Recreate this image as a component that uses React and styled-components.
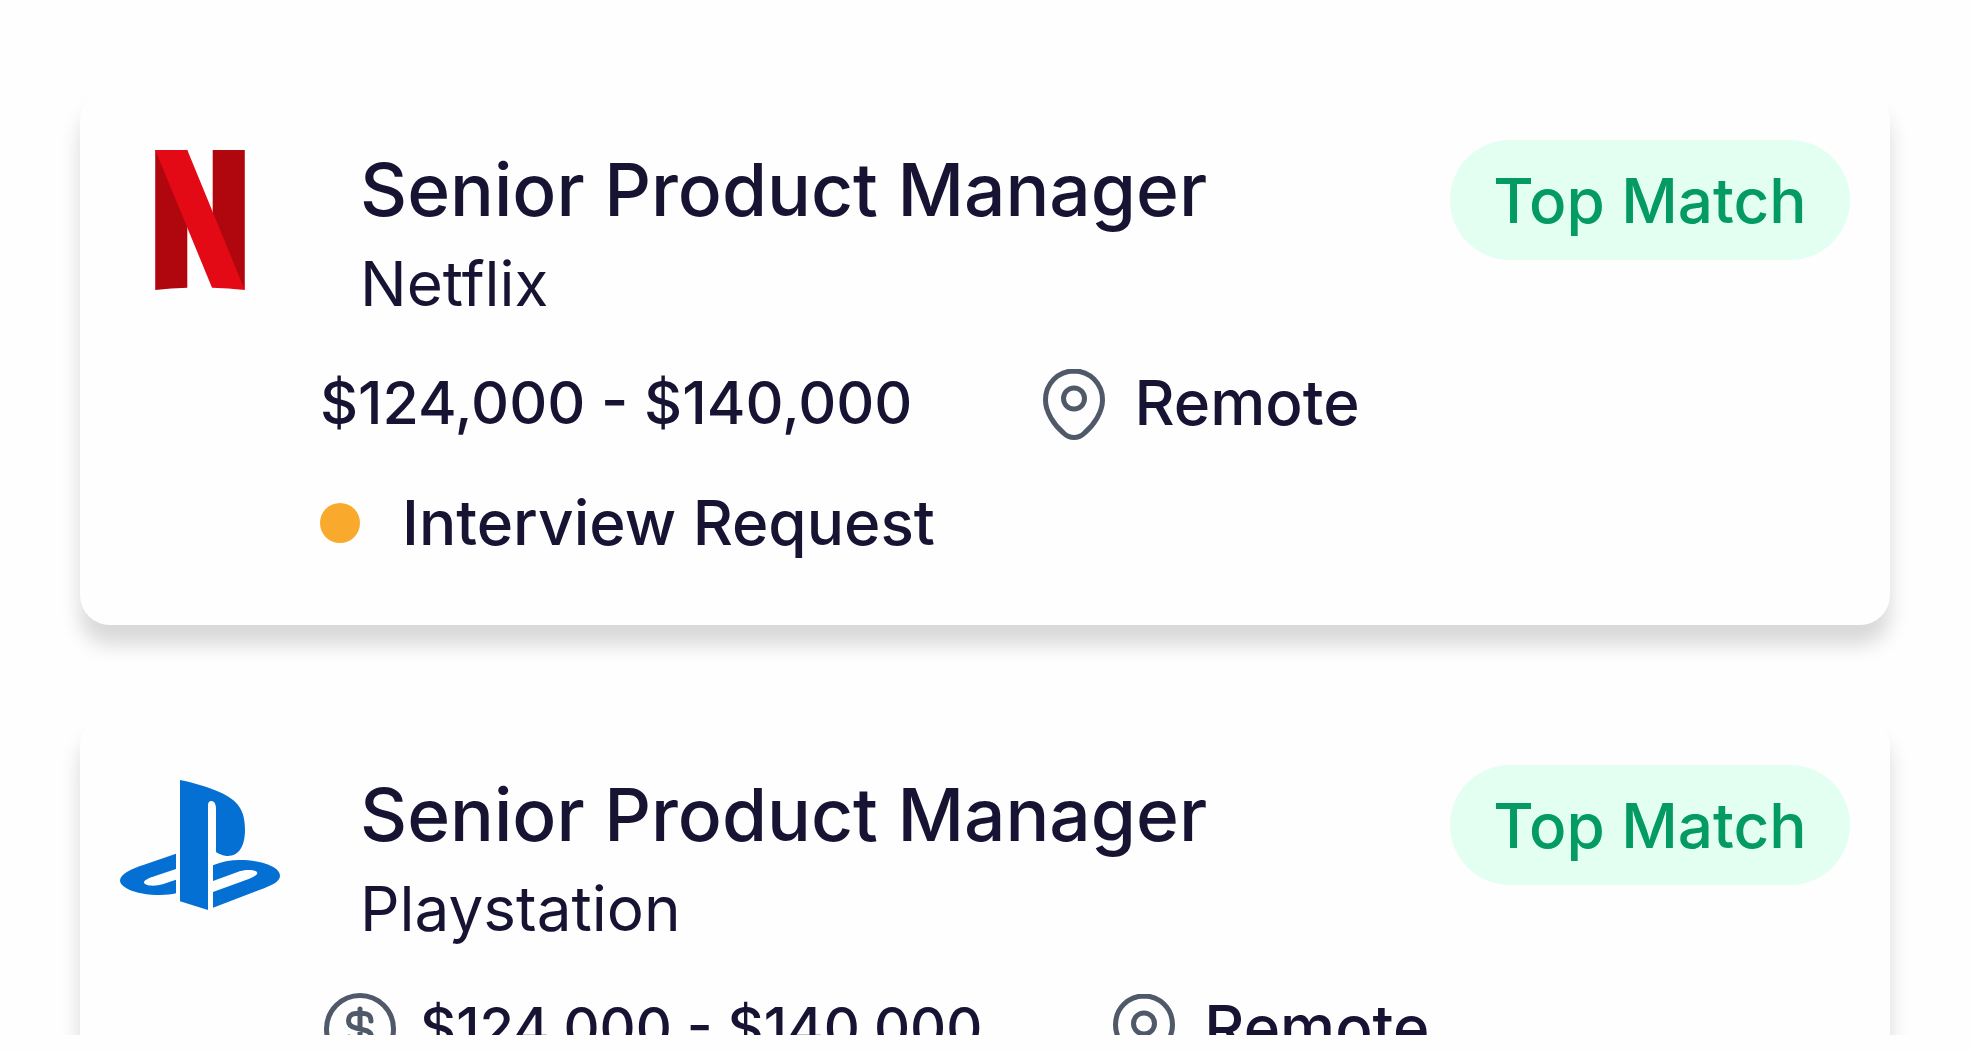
import React from 'react';
import styled, { createGlobalStyle } from 'styled-components';

const GlobalStyle = createGlobalStyle`
  * {
    box-sizing: border-box;
  }

  body {
    margin: 0;
    background: #fefefe;
    color: #171433;
    font-family: Inter, 'Liberation Sans', sans-serif;
  }
`;

const Page = styled.main`
  height: 100vh;
  padding-bottom: 15px;
`;

const JobList = styled.ul`
  display: flex;
  flex-direction: column;
  gap: 90px;
  height: 100%;
  margin: 0;
  padding: 90px 80px 0;
  overflow: hidden;
  list-style: none;
`;

const JobCard = styled.li`
  flex-shrink: 0;
  padding: 50px 40px 57px;
  border-radius: 30px;
  background: #fefefe;
  box-shadow: 0 20px 20px rgba(0, 0, 0, 0.15);
`;

const CardHeader = styled.header`
  display: flex;
  align-items: flex-start;
`;

const LogoBox = styled.div`
  display: flex;
  flex-shrink: 0;
  align-items: center;
  justify-content: center;
  width: 160px;
  height: 160px;
  margin-right: 80px;
`;

const Heading = styled.div`
  flex: 1;
  min-width: 0;
`;

const JobTitle = styled.h2`
  margin: 0;
  font-size: 73px;
  font-weight: 500;
  line-height: 100px;
`;

const Company = styled.p`
  margin: 0;
  font-size: 62px;
  font-weight: 400;
  line-height: 88px;
`;

const Badge = styled.span`
  display: flex;
  flex-shrink: 0;
  align-items: center;
  justify-content: center;
  width: 400px;
  height: 120px;
  border-radius: 60px;
  background: #e3fff2;
  color: #039a65;
  font-size: 62px;
  font-weight: 500;
`;

const Details = styled.div`
  display: flex;
  flex-direction: column;
  gap: 30px;
  margin-top: 30px;
  padding-left: 200px;
`;

const DetailRow = styled.div`
  display: flex;
  align-items: center;
  gap: 122px;
`;

const Detail = styled.span`
  display: flex;
  align-items: center;
  gap: 20px;
  font-size: ${({ $size }) => $size || 62}px;
  font-weight: 500;
  line-height: 90px;
  white-space: nowrap;
`;

const Status = styled.div`
  display: flex;
  align-items: center;
  gap: 42px;
  font-size: 62px;
  font-weight: 500;
  line-height: 90px;
`;

const StatusDot = styled.span`
  width: 40px;
  height: 40px;
  border-radius: 50%;
  background: #f9a92c;
`;

const LineIcon = styled.svg`
  flex-shrink: 0;
  width: 80px;
  height: 80px;
  fill: none;
  stroke: #4f5969;
  stroke-width: 5;
  stroke-linecap: round;
  stroke-linejoin: round;
`;

function NetflixLogo() {
  return (
    <svg width="90" height="140" viewBox="286 270 268 419" role="img" aria-label="Netflix">
      <path fill="#b0060e" d="M286 270H382V682Q334 683 286 689ZM458 270H554V689L458 600Z" />
      <path fill="#e30a16" d="M286 270H382L554 689Q505 683 456 682Z" />
    </svg>
  );
}

function PlaystationLogo() {
  return (
    <svg width="160" height="130" viewBox="180 120 480 390" role="img" aria-label="Playstation">
      <g fill="#0470d3">
        <path d="M360 120C400 128 446 142 478 156C535 181 555 212 555 268C555 322 535 350 500 348C488 347 477 342 468 336V206C468 192 463 183 454 183C447 183 444 188 444 196V510L360 484Z" />
        <path d="M348 341L252 374C215 386 180 402 180 422C182 446 238 465 298 465C320 465 335 463 348 460V419L308 433C285 440 252 438 252 427C252 420 270 413 285 408L348 387Z" />
        <path d="M459 376C485 365 510 360 540 360C600 360 660 380 660 407C660 425 635 436 600 449L459 503V456L566 417C582 411 592 404 592 399C592 389 560 387 541 393L459 423Z" />
      </g>
    </svg>
  );
}

function PinIcon() {
  return (
    <LineIcon viewBox="0 0 80 80" aria-hidden="true">
      <path d="M40 8C24.3 8 11.5 20.5 11.5 37C11.5 49 20 62 29.5 70C35.5 76 44.5 76 50.5 70C60 62 68.5 49 68.5 37C68.5 20.5 55.7 8 40 8Z" />
      <circle cx="40" cy="35.5" r="10.5" />
    </LineIcon>
  );
}

function DollarIcon() {
  return (
    <LineIcon viewBox="0 0 80 80" aria-hidden="true">
      <circle cx="40" cy="41" r="33.5" />
      <path d="M40 21V61M51 33C51 28 48 25.5 44 25.5H36C31 25.5 28.5 29 28.5 33C28.5 37 31 39 36 40L44 42C49 43 51.5 45 51.5 49C51.5 53 48 56.5 44 56.5H36C32 56.5 29 53 29 49" />
    </LineIcon>
  );
}

const jobs = [
  {
    company: 'Netflix',
    title: 'Senior Product Manager',
    salary: '$124,000 - $140,000',
    location: 'Remote',
    Logo: NetflixLogo,
    salaryIcon: false,
  },
  {
    company: 'Playstation',
    title: 'Senior Product Manager',
    salary: '$124,000 - $140,000',
    location: 'Remote',
    Logo: PlaystationLogo,
    salaryIcon: true,
  },
];

function Job({ job }) {
  const { company, title, salary, location, Logo, salaryIcon } = job;

  return (
    <JobCard>
      <CardHeader>
        <LogoBox>
          <Logo />
        </LogoBox>
        <Heading>
          <JobTitle>{title}</JobTitle>
          <Company>{company}</Company>
        </Heading>
        <Badge>Top Match</Badge>
      </CardHeader>
      <Details>
        <DetailRow>
          <Detail $size={salaryIcon ? 56 : 59}>
            {salaryIcon && <DollarIcon />}
            {salary}
          </Detail>
          <Detail>
            <PinIcon />
            {location}
          </Detail>
        </DetailRow>
        <Status>
          <StatusDot />
          Interview Request
        </Status>
      </Details>
    </JobCard>
  );
}

function App() {
  return (
    <>
      <GlobalStyle />
      <Page>
        <JobList>
          {jobs.map((job) => (
            <Job key={job.company} job={job} />
          ))}
        </JobList>
      </Page>
    </>
  );
}

export default App;
